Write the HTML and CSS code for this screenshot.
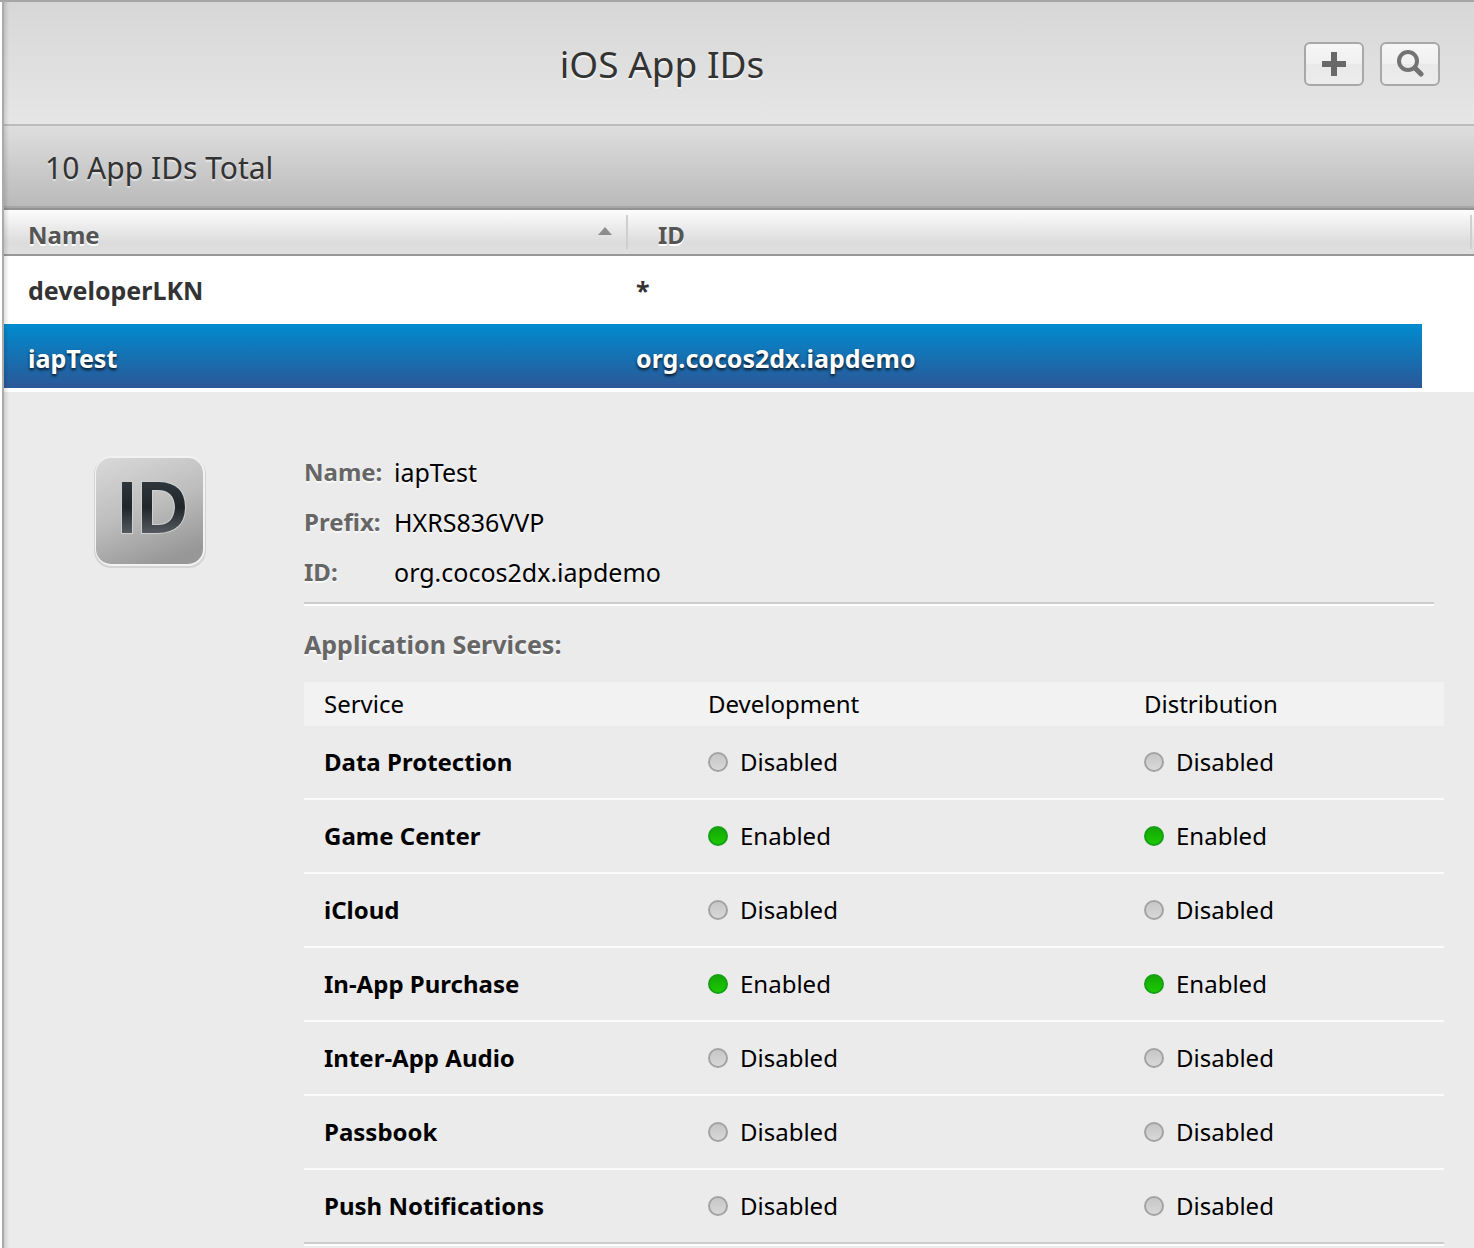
FILE: index.html
```html
<!DOCTYPE html>
<html lang="en">
<head>
<meta charset="utf-8">
<title>iOS App IDs</title>
<link rel="stylesheet" href="styles.css">
</head>
<body>
<main class="panel">
  <header class="toolbar">
    <h1 class="title">iOS App IDs</h1>
    <div class="actions">
      <button class="tool" type="button" aria-label="Add">
        <svg width="24" height="24" viewBox="0 0 24 24"><path d="M9 0h6v9h9v6h-9v9H9v-9H0V9h9z" fill="#696969"/></svg>
      </button>
      <button class="tool" type="button" aria-label="Search">
        <svg width="28" height="28" viewBox="0 0 28 28" fill="none" stroke="#737373"><circle cx="12" cy="11" r="9" stroke-width="4"/><path d="M18 17l3 3" stroke-width="4"/><path d="M20 19l5 5" stroke-width="5" stroke-linecap="round"/></svg>
      </button>
    </div>
  </header>
  <p class="total">10 App IDs Total</p>
  <table class="ids">
    <colgroup><col class="col-name"><col><col class="col-gutter"></colgroup>
    <thead>
      <tr>
        <th scope="col"><div class="head head-name">Name<svg width="14" height="8" viewBox="0 0 14 8"><path d="M7 0l7 8H0z" fill="#8d8d8d"/></svg></div></th>
        <th scope="col" colspan="2"><div class="head head-id">ID</div></th>
      </tr>
    </thead>
    <tbody>
      <tr class="row"><td>developerLKN</td><td>*</td><td></td></tr>
      <tr class="row selected"><td>iapTest</td><td>org.cocos2dx.iapdemo</td><td></td></tr>
      <tr>
        <td class="detail-cell" colspan="3">
          <section class="detail">
            <svg class="badge" width="116" height="116" viewBox="0 0 116 116" role="img" aria-label="App ID">
              <defs>
                <linearGradient id="plate" x1="0.2" y1="0" x2="0.6" y2="1"><stop offset="0" stop-color="#d6d6d6"/><stop offset="0.5" stop-color="#bdbdbd"/><stop offset="1" stop-color="#979797"/></linearGradient>
                <linearGradient id="ink" x1="0" y1="0" x2="0" y2="1"><stop offset="0" stop-color="#2f363b"/><stop offset="0.5" stop-color="#20272c"/><stop offset="1" stop-color="#545a5f"/></linearGradient>
              </defs>
              <rect x="2" y="3" width="112" height="111" rx="17" fill="#d4d4d4"/>
              <rect x="3" y="2" width="110" height="110" rx="17" fill="#f2f2f2"/>
              <rect x="4" y="4" width="107" height="106" rx="15" fill="url(#plate)"/>
              <g fill="url(#ink)" stroke="#d0d0d0" stroke-width="2" paint-order="stroke">
                <path d="M30 28h10v51H30z"/>
                <path fill-rule="evenodd" d="M50 28h17q26 1 26 25 0 25-27 26H50zm10 8v35h6q16 0 17-18-1-17-17-17z"/>
              </g>
            </svg>
            <div class="info">
              <dl class="facts">
                <dt>Name:</dt><dd>iapTest</dd>
                <dt>Prefix:</dt><dd>HXRS836VVP</dd>
                <dt>ID:</dt><dd>org.cocos2dx.iapdemo</dd>
              </dl>
              <h2 class="subtitle">Application Services:</h2>
              <table class="services">
                <colgroup><col class="col-service"><col class="col-dev"><col></colgroup>
                <thead><tr><th scope="col">Service</th><th scope="col">Development</th><th scope="col">Distribution</th></tr></thead>
                <tbody>
                  <tr><th scope="row">Data Protection</th><td><span class="status">Disabled</span></td><td><span class="status">Disabled</span></td></tr>
                  <tr><th scope="row">Game Center</th><td><span class="status on">Enabled</span></td><td><span class="status on">Enabled</span></td></tr>
                  <tr><th scope="row">iCloud</th><td><span class="status">Disabled</span></td><td><span class="status">Disabled</span></td></tr>
                  <tr><th scope="row">In-App Purchase</th><td><span class="status on">Enabled</span></td><td><span class="status on">Enabled</span></td></tr>
                  <tr><th scope="row">Inter-App Audio</th><td><span class="status">Disabled</span></td><td><span class="status">Disabled</span></td></tr>
                  <tr><th scope="row">Passbook</th><td><span class="status">Disabled</span></td><td><span class="status">Disabled</span></td></tr>
                  <tr><th scope="row">Push Notifications</th><td><span class="status">Disabled</span></td><td><span class="status">Disabled</span></td></tr>
                </tbody>
              </table>
            </div>
          </section>
        </td>
      </tr>
    </tbody>
  </table>
</main>
</body>
</html>
```

FILE: styles.css
```css
*, *::before, *::after { box-sizing: border-box; }
body {
  margin: 0;
  padding-left: 2px;
  border-top: 2px solid #a6a6a6;
  background: #fff;
  color: #000;
  font: 24px/32px "Noto Sans", "Open Sans", sans-serif;
}
h1, h2, p, dl, dd { margin: 0; }
table { width: 100%; border-spacing: 0; table-layout: fixed; }
th, td { padding: 0; text-align: left; }

.panel { position: relative; border-left: 2px solid #aaa; }
.panel::after {
  content: "";
  position: absolute;
  inset: 0 auto 0 0;
  width: 5px;
  background: linear-gradient(90deg, rgba(0, 0, 0, .12), transparent);
  pointer-events: none;
}

.toolbar {
  display: grid;
  grid-template-columns: 1fr auto 1fr;
  align-items: center;
  height: 124px;
  padding: 2px 34px 0 0;
  border-bottom: 2px solid #bcbcbc;
  background: linear-gradient(#d7d7d7, #e6e6e6);
}
.title {
  grid-column: 2;
  margin-right: 120px;
  color: #333;
  font-size: 37px;
  font-weight: 400;
  line-height: 48px;
  text-shadow: 0 2px 1px rgba(255, 255, 255, .7);
}
.actions { display: flex; justify-content: flex-end; gap: 16px; }
.tool {
  display: flex;
  align-items: center;
  justify-content: center;
  width: 60px;
  height: 44px;
  padding: 0;
  border: 2px solid #a8a8a8;
  border-radius: 6px;
  background: linear-gradient(#f6f6f6, #f0f0f0 50%, #e9e9e9 50%, #ececec);
}

.total {
  height: 84px;
  padding: 22px 41px;
  border-bottom: 2px solid #929292;
  background: linear-gradient(#dedede, #b9b9b9);
  box-shadow: inset 0 -2px #a6a6a6;
  color: #333;
  font-size: 30px;
  line-height: 40px;
  text-shadow: 0 2px 1px rgba(255, 255, 255, .5);
}

.col-name { width: 624px; }
.col-gutter { width: 52px; }
.ids > thead th {
  height: 46px;
  border-bottom: 2px solid #979797;
  background: linear-gradient(#fcfcfc, #dcdcdc 75%, #dfdfdf);
}
.head {
  display: flex;
  align-items: center;
  justify-content: space-between;
  height: 34px;
  border-right: 2px solid #cfcfcf;
  color: #555;
  text-shadow: 0 2px #fff;
}
.head-name { padding: 6px 14px 0 24px; }
.head-name svg { margin-bottom: 8px; }
.head-id { padding: 6px 0 0 30px; margin-right: 2px; }

.row td { height: 68px; color: #333; font-size: 25px; font-weight: 700; }
.row td:first-child { padding-left: 24px; }
.row td:nth-child(2) { padding-left: 8px; }
.row.selected td { border-bottom: 4px solid #fff; padding-top: 4px; }
.row.selected td:not(:last-child) {
  background: linear-gradient(#008ccf, #2b5797) padding-box;
  color: #fff;
  text-shadow: 0 2px 3px rgba(0, 0, 0, .8);
}

.detail-cell { background: #ebebeb; }
.detail {
  display: grid;
  grid-template-columns: 116px minmax(0, 1fr);
  gap: 96px;
  padding: 55px 30px 4px 88px;
}
.badge { margin-top: 7px; }
.facts {
  display: grid;
  grid-template-columns: 90px 1fr;
  margin-right: 10px;
  padding-bottom: 5px;
  border-bottom: 2px solid #cdcdcd;
  box-shadow: 0 2px #fff;
  line-height: 50px;
  text-shadow: 0 2px 1px rgba(255, 255, 255, .7);
}
.facts dt, .subtitle { color: #666; font-weight: 700; }
.facts dd { font-size: 25px; }
.subtitle { padding: 24px 0 22px; font-size: 25px; text-shadow: 0 2px 1px rgba(255, 255, 255, .7); }
.services { border-bottom: 2px solid #cdcdcd; box-shadow: 0 2px #fff; }
.col-service { width: 404px; }
.col-dev { width: 436px; }
.services thead th { height: 44px; background: #f2f2f2; font-weight: 400; }
.services tbody th, .services tbody td { height: 74px; border-bottom: 2px solid #fbfbfb; }
.services th:first-child { padding-left: 20px; }
.services tbody tr:last-child > * { height: 72px; border-bottom: 0; }
.status { display: flex; align-items: center; gap: 12px; }
.status::before {
  content: "";
  width: 20px;
  height: 20px;
  border: 2px solid #a3a3a3;
  border-radius: 50%;
  background: linear-gradient(#c6c6c6, #d8d8d8);
}
.status.on::before { border-color: #16a014; background: linear-gradient(#14a805, #1cc803); }
```
